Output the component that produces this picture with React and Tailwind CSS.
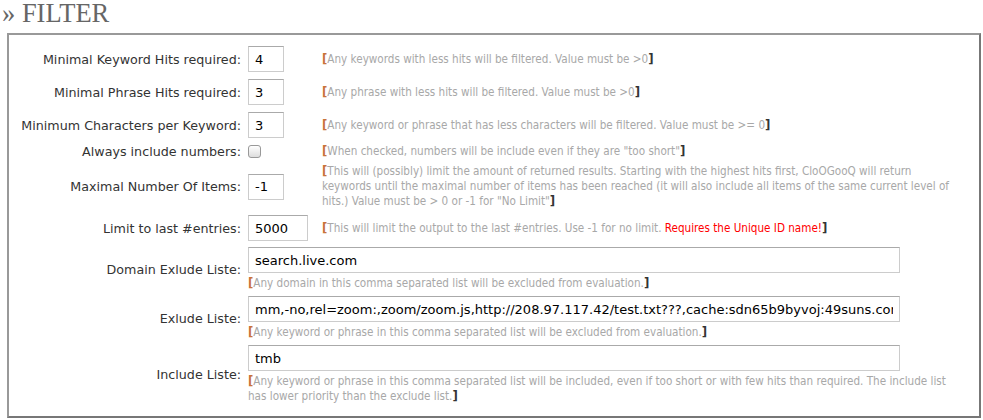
const labelFont = { fontFamily: '"DejaVu Sans", "Liberation Sans", sans-serif' };
const helpFont = { fontFamily: '"DejaVu Sans Condensed", "Liberation Sans Narrow", sans-serif' };

function Help({ children, className = '' }) {
  return (
    <div className={`text-[11.6px] leading-[15px] text-[#a8a8a8] ${className}`} style={helpFont}>
      <span className="text-[#c8743a] text-[13px] leading-none font-bold">[</span>
      {children}
      <span className="text-[#333] text-[13px] leading-none font-bold">]</span>
    </div>
  );
}

function Label({ children, className = 'min-h-[28px]' }) {
  return (
    <div className={`flex items-center justify-end pr-[7px] text-[12.7px] leading-[15px] text-[#333] ${className}`} style={labelFont}>
      {children}
    </div>
  );
}

function TextInput({ value, width }) {
  return (
    <input
      readOnly
      value={value}
      className={`${width} h-[26px] border border-[#ccc] border-t-[#aaa] bg-white px-[6px] text-[13px] text-black outline-none`}
      style={labelFont}
    />
  );
}

export default function App() {
  return (
    <div className="w-[983px] h-[420px] bg-white overflow-hidden">
      <h2 className="pl-[2px] h-[33px] text-[26.5px] leading-[27px] text-[#666]" style={{ fontFamily: '"Liberation Serif", serif' }}>
        » FILTER
      </h2>
      <div className="ml-[7px] w-[974px] border-2 border-[#999] border-r-[#777] border-b-[#777] pt-[10px] pb-[12px]">
        <div className="grid grid-cols-[239px_74px_1fr] gap-y-[5px] items-center">
          <Label>Minimal Keyword Hits required:</Label>
          <TextInput value="4" width="w-[36px]" />
          <Help>Any keywords with less hits will be filtered. Value must be &gt;0</Help>

          <Label>Minimal Phrase Hits required:</Label>
          <TextInput value="3" width="w-[36px]" />
          <Help>Any phrase with less hits will be filtered. Value must be &gt;0</Help>

          <Label>Minimum Characters per Keyword:</Label>
          <TextInput value="3" width="w-[36px]" />
          <Help>Any keyword or phrase that has less characters will be filtered. Value must be &gt;= 0</Help>

          <Label className="min-h-[15px]">Always include numbers:</Label>
          <div className="flex items-center">
            <span className="w-[13px] h-[13px] rounded-[3px] border border-[#999] bg-gradient-to-b from-white to-[#ddd]" />
          </div>
          <Help>When checked, numbers will be include even if they are "too short"</Help>

          <Label>Maximal Number Of Items:</Label>
          <TextInput value="-1" width="w-[36px]" />
          <Help className="pr-[18px]">
            This will (possibly) limit the amount of returned results. Starting with the highest hits first, CloOGooQ will return keywords until the maximal number of items has been reached (it will also include all items of the same current level of hits.) Value must be &gt; 0 or -1 for "No Limit"
          </Help>

          <Label>Limit to last #entries:</Label>
          <TextInput value="5000" width="w-[60px]" />
          <Help>
            This will limit the output to the last #entries. Use -1 for no limit. <span className="text-[#f00]">Requires the Unique ID name!</span>
          </Help>

          <Label>Domain Exlude Liste:</Label>
          <div className="col-span-2 flex flex-col gap-[3px]">
            <TextInput value="search.live.com" width="w-[652px]" />
            <Help>Any domain in this comma separated list will be excluded from evaluation.</Help>
          </div>

          <Label>Exlude Liste:</Label>
          <div className="col-span-2 flex flex-col gap-[3px]">
            <TextInput value="mm,-no,rel=zoom:,zoom/zoom.js,http://208.97.117.42/test.txt???,cache:sdn65b9byvoj:49suns.com/ahd" width="w-[652px]" />
            <Help>Any keyword or phrase in this comma separated list will be excluded from evaluation.</Help>
          </div>

          <Label>Include Liste:</Label>
          <div className="col-span-2 flex flex-col gap-[3px]">
            <TextInput value="tmb" width="w-[652px]" />
            <Help className="pr-[22px]">
              Any keyword or phrase in this comma separated list will be included, even if too short or with few hits than required. The include list has lower priority than the exclude list.
            </Help>
          </div>
        </div>
      </div>
    </div>
  );
}
